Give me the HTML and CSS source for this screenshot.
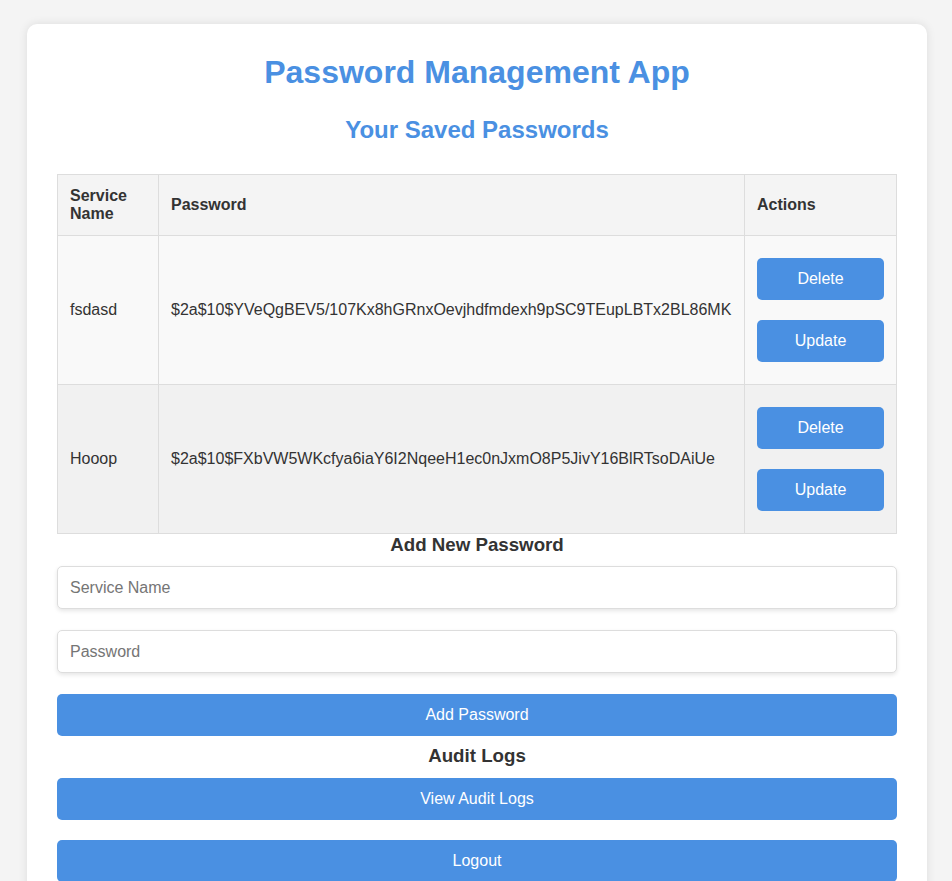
FILE: index.html
```html
<!DOCTYPE html>
<html lang="en">
<head>
<meta charset="utf-8">
<title>Password Management App</title>
<link rel="stylesheet" href="styles.css">
</head>
<body>
<div class="card">
  <h1 class="title">Password Management App</h1>
  <h2 class="subtitle">Your Saved Passwords</h2>
  <table class="pw-table">
    <colgroup>
      <col class="col-service">
      <col>
      <col class="col-actions">
    </colgroup>
    <thead>
      <tr>
        <th>Service Name</th>
        <th>Password</th>
        <th>Actions</th>
      </tr>
    </thead>
    <tbody>
      <tr class="row-odd">
        <td>fsdasd</td>
        <td>$2a$10$YVeQgBEV5/107Kx8hGRnxOevjhdfmdexh9pSC9TEupLBTx2BL86MK</td>
        <td class="actions">
          <div class="action-stack">
            <button class="btn">Delete</button>
            <button class="btn">Update</button>
          </div>
        </td>
      </tr>
      <tr class="row-even">
        <td>Hooop</td>
        <td>$2a$10$FXbVW5WKcfya6iaY6I2NqeeH1ec0nJxmO8P5JivY16BlRTsoDAiUe</td>
        <td class="actions">
          <div class="action-stack">
            <button class="btn">Delete</button>
            <button class="btn">Update</button>
          </div>
        </td>
      </tr>
    </tbody>
  </table>
  <h3 class="section-title first">Add New Password</h3>
  <input class="field" type="text" placeholder="Service Name">
  <input class="field second" type="password" placeholder="Password">
  <button class="btn wide add">Add Password</button>
  <h3 class="section-title">Audit Logs</h3>
  <button class="btn wide">View Audit Logs</button>
  <button class="btn wide logout">Logout</button>
</div>
</body>
</html>
```

FILE: styles.css
```css
html, body {
  margin: 0;
  padding: 0;
}
body {
  background: #f4f4f4;
  font-family: "Liberation Sans", Arial, sans-serif;
  color: #333;
  padding-left: 2px;
}
.card {
  width: 840px;
  margin: 24px auto 0;
  padding: 30px;
  background: #fff;
  border-radius: 10px;
  box-shadow: 0 0 10px rgba(0, 0, 0, 0.1);
}
.title {
  margin: 0 0 25px;
  font-size: 32px;
  font-weight: bold;
  text-align: center;
  color: #4a90e2;
}
.subtitle {
  margin: 0 0 30px;
  font-size: 24px;
  font-weight: bold;
  text-align: center;
  color: #4a90e2;
}
.pw-table {
  width: 840px;
  border-collapse: collapse;
  table-layout: fixed;
  font-size: 16px;
}
.col-service { width: 101px; }
.col-actions { width: 152px; }
.pw-table th,
.pw-table td {
  border: 1px solid #ddd;
  padding: 12px;
  text-align: left;
  color: #333;
  vertical-align: middle;
}
.pw-table th {
  background: #f4f4f4;
  font-weight: bold;
}
.row-odd td { background: #f9f9f9; }
.row-even td { background: #f1f1f1; }
.action-stack {
  display: flex;
  flex-direction: column;
  gap: 20px;
  padding: 10px 0;
}
.btn {
  display: block;
  width: 100%;
  box-sizing: border-box;
  border: none;
  border-radius: 5px;
  background: #4a90e2;
  color: #fff;
  font-family: "Liberation Sans", Arial, sans-serif;
  font-size: 16px;
  line-height: 18px;
  padding: 12px;
  height: 42px;
  text-align: center;
}
.section-title {
  margin: 9px 0 11px;
  font-size: 18.72px;
  font-weight: bold;
  text-align: center;
  color: #333;
}
.section-title.first {
  margin-top: 0;
  margin-bottom: 10px;
}
.field {
  display: block;
  width: 100%;
  height: 43px;
  box-sizing: border-box;
  margin: 0;
  padding: 0 12px;
  border: 1px solid #ddd;
  border-radius: 5px;
  box-shadow: 0 2px 4px rgba(0, 0, 0, 0.1);
  font-family: "Liberation Sans", Arial, sans-serif;
  font-size: 16px;
  color: #333;
  background: #fff;
}
.field::placeholder {
  color: #757575;
}
.field.second {
  margin-top: 21px;
}
.btn.add {
  margin-top: 21px;
}
.btn.logout {
  margin-top: 20px;
}
```
